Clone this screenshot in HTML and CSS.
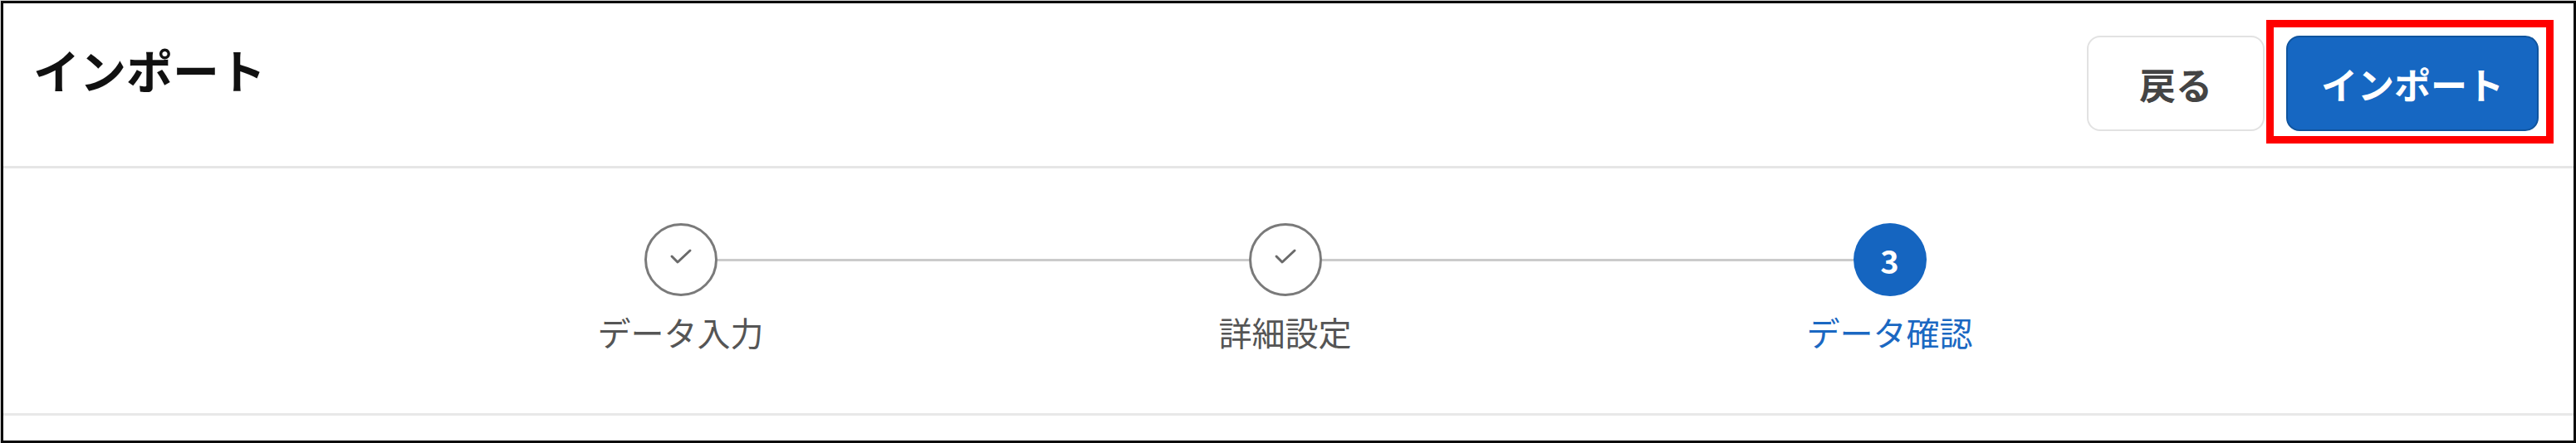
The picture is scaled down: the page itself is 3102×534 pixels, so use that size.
FILE: index.html
```html
<!DOCTYPE html>
<html lang="ja">
<head>
  <meta charset="UTF-8">
  <title>インポート</title>
  <link rel="stylesheet" href="styles.css">
</head>
<body>
  <div class="frame">
    <header class="page-header">
      <h1 class="page-title">インポート</h1>
      <div class="actions">
        <button class="btn btn-back">戻る</button>
        <button class="btn btn-primary">インポート<span class="highlight"></span></button>
      </div>
    </header>

    <div class="stepper">
      <div class="step done">
        <div class="step-circle">
          <svg width="28" height="20" viewBox="0 0 28 20"><polyline points="3,10 10,17 25,3" fill="none" stroke="#6a6a6a" stroke-width="3" stroke-linecap="round" stroke-linejoin="round"/></svg>
        </div>
        <div class="step-label">データ入力</div>
      </div>
      <div class="step done">
        <div class="step-circle">
          <svg width="28" height="20" viewBox="0 0 28 20"><polyline points="3,10 10,17 25,3" fill="none" stroke="#6a6a6a" stroke-width="3" stroke-linecap="round" stroke-linejoin="round"/></svg>
        </div>
        <div class="step-label">詳細設定</div>
      </div>
      <div class="step active">
        <div class="step-circle">3</div>
        <div class="step-label">データ確認</div>
      </div>
    </div>

    <div class="page-body"></div>
  </div>
</body>
</html>
```

FILE: styles.css
```css
html, body {
  margin: 0;
  height: 100%;
}

body {
  background: #d6d6d6;
  font-family: "Noto Sans CJK JP", "Noto Sans", sans-serif;
  color: #222;
}

.frame {
  box-sizing: border-box;
  margin: 1px 0 0 1px;
  width: calc(100% - 1px);
  height: calc(100% - 1px);
  border: 3px solid #0a0a0a;
  background: #fff;
  display: flex;
  flex-direction: column;
}

.page-header {
  display: flex;
  justify-content: space-between;
  align-items: flex-start;
  padding: 39px 42px 42px 36px;
  border-bottom: 3px solid #e6e6e6;
}

.page-title {
  margin: 6px 0 0;
  font-size: 56px;
  line-height: 1.2;
  font-weight: bold;
  color: #111;
}

.actions {
  display: flex;
  gap: 26px;
}

.btn {
  box-sizing: border-box;
  height: 115px;
  padding: 0 40px;
  font-family: inherit;
  font-size: 44px;
  font-weight: bold;
  border-radius: 16px;
  cursor: pointer;
}

.btn-back {
  min-width: 214px;
  background: #fff;
  color: #444;
  border: 2px solid #e2e2e2;
}

.btn-primary {
  position: relative;
  min-width: 303px;
  background: #1667c2;
  color: #fff;
  border: 2px solid #0f549e;
}

/* 注目枠 */
.highlight {
  position: absolute;
  left: -26px;
  top: -21px;
  right: -20px;
  bottom: -17px;
  border: 9px solid #f00;
  pointer-events: none;
}

.stepper {
  display: grid;
  grid-template-columns: repeat(3, 728px);
  justify-content: center;
  padding: 66px 8px 74px 0;
  border-bottom: 3px solid #e8e8e8;
}

.step {
  position: relative;
  display: flex;
  flex-direction: column;
  align-items: center;
}

.step:not(:last-child)::after {
  content: "";
  position: absolute;
  top: 43px;
  left: calc(50% + 44px);
  width: calc(100% - 88px);
  height: 3px;
  background: #cbcbcb;
}

.step-circle {
  box-sizing: border-box;
  width: 88px;
  height: 88px;
  border-radius: 50%;
  display: flex;
  align-items: center;
  justify-content: center;
}

.step.done .step-circle {
  border: 3px solid #7a7a7a;
  padding-bottom: 8px;
}

.step.active .step-circle {
  background: #1565c0;
  color: #fff;
  font-size: 38px;
  font-weight: bold;
}

.step-label {
  margin-top: 19px;
  font-size: 40px;
  line-height: 1.2;
  color: #555;
}

.step.active .step-label {
  color: #1b68c2;
}

.page-body {
  flex: 1;
}
```
